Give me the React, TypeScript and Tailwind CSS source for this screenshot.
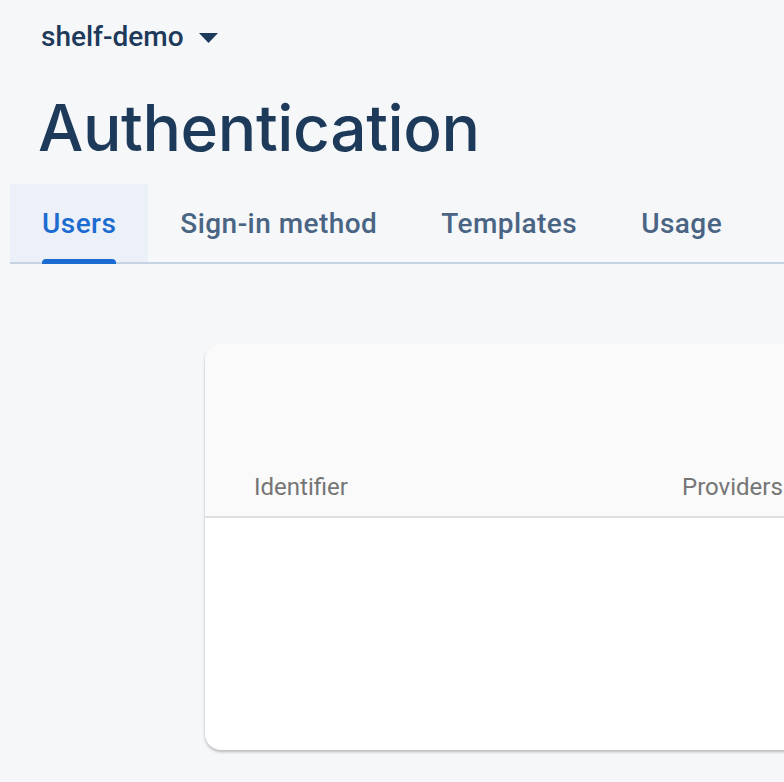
import { useState } from 'react';

const tabs = ['Users', 'Sign-in method', 'Templates', 'Usage'];

export default function App() {
  const [active, setActive] = useState(0);

  return (
    <div className="min-h-screen w-[784px] h-[782px] overflow-hidden bg-[#f6f7f9] font-['Roboto',sans-serif]">
      {/* Project selector */}
      <div className="flex items-center pl-[41px] pt-[18px] h-[38px] box-content">
        <span className="text-[28px] font-medium text-[#1d3a5b] leading-[38px]">shelf-demo</span>
        <svg className="ml-[15px] mt-[1px]" width="19" height="10" viewBox="0 0 19 10">
          <path d="M0 0 L19 0 L9.5 10 Z" fill="#1d3a5b" />
        </svg>
      </div>

      <h1 className="pl-[38px] mt-[34px] text-[64px] leading-[76px] text-[#1d3a5b] font-['Inter',sans-serif] font-medium tracking-[-0.4px]">
        Authentication
      </h1>

      {/* Tabs */}
      <div className="ml-[10px] mt-[18px] flex border-b-2 border-[#c5d3e2] h-[80px]">
        {tabs.map((tab, i) => (
          <button
            key={tab}
            onClick={() => setActive(i)}
            className={`relative px-[32px] h-full text-[28px] font-medium tracking-[0.45px] ${
              i === active ? 'bg-[#ecf1f9] text-[#1b6bd0]' : 'text-[#4a6584]'
            }`}
          >
            <span className="relative inline-block h-full leading-[80px]">
              {tab}
              {i === active && (
                <span className="absolute left-0 right-0 bottom-[-2px] h-[5px] rounded-t-[4px] bg-[#1b6bd0]" />
              )}
            </span>
          </button>
        ))}
      </div>

      {/* Users table card */}
      <div className="ml-[205px] mt-[80px] w-[700px] h-[406px] rounded-[16px] bg-white shadow-[0_2px_3px_rgba(0,0,0,0.25)] overflow-hidden">
        <div className="h-[174px] bg-[#fafafa] border-b-2 border-[#e0e0e0] flex items-end pb-[14px] text-[24px] leading-[30px] text-[#757575]">
          <span className="ml-[49px] w-[428px]">Identifier</span>
          <span>Providers</span>
        </div>
      </div>
    </div>
  );
}
